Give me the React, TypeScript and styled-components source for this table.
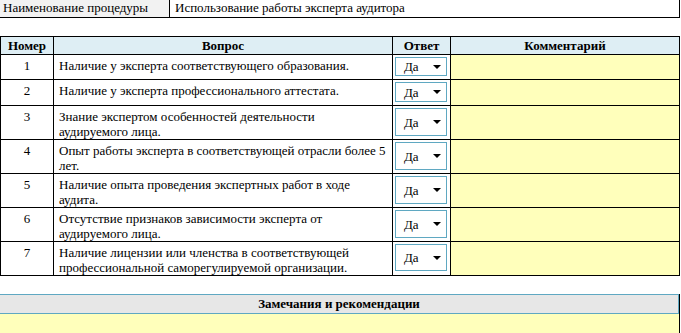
import styled, { createGlobalStyle } from 'styled-components'

const GlobalStyle = createGlobalStyle`
  body {
    margin: 0;
    background: #ffffff;
    color: #000000;
  }
`

const QUESTIONS = [
  { num: 1, text: 'Наличие у эксперта соответствующего образования.', height: 25 },
  { num: 2, text: 'Наличие у эксперта профессионального аттестата.', height: 26 },
  { num: 3, text: 'Знание экспертом особенностей деятельности аудируемого лица.', height: 34 },
  { num: 4, text: 'Опыт работы эксперта в соответствующей отрасли более 5 лет.', height: 34 },
  { num: 5, text: 'Наличие опыта проведения экспертных работ в ходе аудита.', height: 34 },
  { num: 6, text: 'Отсутствие признаков зависимости эксперта от аудируемого лица.', height: 34 },
  { num: 7, text: 'Наличие лицензии или членства в соответствующей профессиональной саморегулируемой организации.', height: 33 },
]

const App = () => {
  return (
    <Page>
      <GlobalStyle />
      <InfoRow>
        <InfoLabel>Наименование процедуры</InfoLabel>
        <InfoValue>Использование работы эксперта аудитора</InfoValue>
      </InfoRow>

      <Checklist>
        <colgroup>
          <col style={{ width: 53 }} />
          <col style={{ width: 339 }} />
          <col style={{ width: 58 }} />
          <col />
        </colgroup>
        <thead>
          <tr>
            <HeadCell>Номер</HeadCell>
            <HeadCell>Вопрос</HeadCell>
            <HeadCell>Ответ</HeadCell>
            <HeadCell>Комментарий</HeadCell>
          </tr>
        </thead>
        <tbody>
          {QUESTIONS.map((q) => (
            <Row key={q.num} $height={q.height}>
              <NumCell>{q.num}</NumCell>
              <QuestionCell>{q.text}</QuestionCell>
              <AnswerCell>
                <AnswerSelect $height={q.height - 6}>
                  <span>Да</span>
                  <Arrow />
                </AnswerSelect>
              </AnswerCell>
              <CommentCell />
            </Row>
          ))}
        </tbody>
      </Checklist>

      <Remarks>
        <RemarksTitle>Замечания и рекомендации</RemarksTitle>
        <RemarksBody />
      </Remarks>
    </Page>
  )
}

export default App

/* ****************************************************************
  Лист проверки процедуры: шапка, таблица вопросов, замечания
*******************************************************************/

const Page = styled.div`
  width: 680px;
  height: 333px;
  overflow: hidden;
  font-family: 'Liberation Serif', 'Times New Roman', serif;
  font-size: 13px;
`

const InfoRow = styled.div`
  display: grid;
  grid-template-columns: 170px 1fr;
  height: 17px;
  border-bottom: 1px solid #000;
  border-right: 1px solid #000;
  line-height: 16px;
`

const InfoLabel = styled.div`
  background: #f2f2f2;
  border-right: 1px solid #000;
  padding-left: 3px;
`

const InfoValue = styled.div`
  padding-left: 5px;
`

const Checklist = styled.table`
  margin-top: 18px;
  width: 680px;
  border-collapse: collapse;
  table-layout: fixed;
  border: 1px solid #000;
  font-family: 'Liberation Serif', 'Times New Roman', serif;
  font-size: 13px;
`

const HeadCell = styled.th`
  height: 17px;
  padding: 0;
  background: #deeef4;
  border: 1px solid #000;
  font-weight: bold;
  text-align: center;
  line-height: 16px;
`

const Row = styled.tr<{ $height: number }>`
  height: ${(p) => p.$height}px;
`

const NumCell = styled.td`
  padding: 3px 0 0;
  border: 1px solid #000;
  text-align: center;
  vertical-align: top;
  line-height: 15px;
  overflow: hidden;
`

const QuestionCell = styled.td`
  padding: 3px 6px 0 5px;
  border: 1px solid #000;
  vertical-align: top;
  line-height: 15px;
  overflow: hidden;
`

const AnswerCell = styled.td`
  padding: 2px 3px 0 2px;
  border: 1px solid #000;
  vertical-align: top;
`

const AnswerSelect = styled.div<{ $height: number }>`
  display: flex;
  align-items: center;
  justify-content: space-between;
  box-sizing: border-box;
  height: ${(p) => p.$height}px;
  padding: 0 5px 0 8px;
  border: 1px solid #5fa8c2;
  background: #fff;
  line-height: 15px;
`

const Arrow = styled.i`
  width: 0;
  height: 0;
  border-left: 4px solid transparent;
  border-right: 4px solid transparent;
  border-top: 4px solid #000;
`

const CommentCell = styled.td`
  padding: 0;
  border: 1px solid #000;
  background: #ffffbb;
`

const Remarks = styled.section`
  margin-top: 18px;
  border-right: 1px solid #000;
`

const RemarksTitle = styled.div`
  height: 18px;
  background: #e7e7e7;
  border-top: 1px solid #5fa8c2;
  border-bottom: 1px solid #5fa8c2;
  border-right: 1px solid #5fa8c2;
  text-align: center;
  font-weight: bold;
  line-height: 18px;
`

const RemarksBody = styled.div`
  height: 40px;
  background: #ffffbb;
`
